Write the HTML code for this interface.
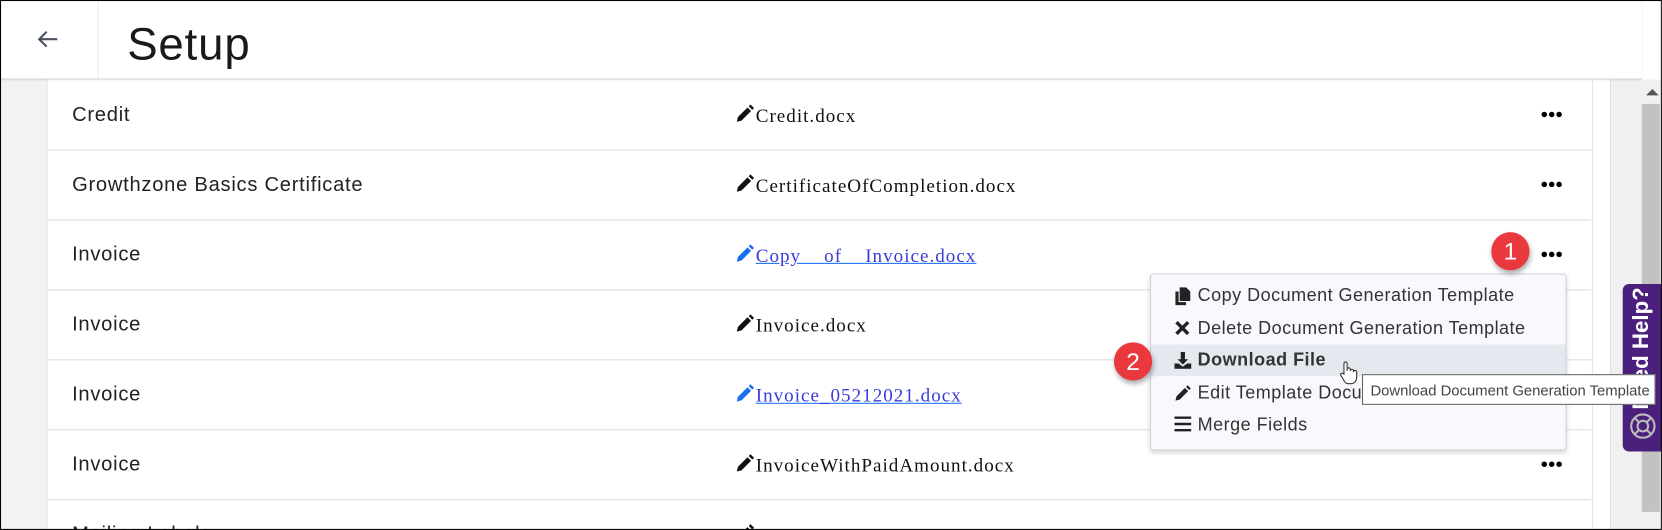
<!DOCTYPE html>
<html><head><meta charset="utf-8"><style>
html,body{margin:0;padding:0;width:1662px;height:530px;overflow:hidden;background:#fff}
#w{position:absolute;left:0;top:0;width:1568px;height:500px;transform:scale(1.0599);transform-origin:0 0;font-family:"Liberation Sans",sans-serif;overflow:hidden}
.a{position:absolute}
.row{position:absolute;left:44px;width:1457px;height:66px;border-bottom:1px solid #dcdcdc}
.c1{position:absolute;left:24px;top:23px;font-size:19px;color:#222;letter-spacing:0.7px}
.c2{position:absolute;left:650px;top:23px;font-family:"Liberation Serif",serif;font-size:18px;color:#111;white-space:pre;letter-spacing:0.95px}
.c2 svg{vertical-align:-1px;margin-right:1px}
.lnk{color:#3b3bdc;text-decoration:underline;text-decoration-color:#1a6ef5}
.dots{position:absolute;left:1410px;top:30px}
.mi{position:absolute;left:0;width:391px;height:30px;font-size:17px;color:#333;letter-spacing:0.45px}
.mi span{position:absolute;left:44px;top:5px;white-space:nowrap}
.mi svg{position:absolute;left:22px;top:7px}
.badge{position:absolute;width:36px;height:36px;border-radius:50%;background:#e9383e;color:#fff;font-size:23px;text-align:center;line-height:36px;box-shadow:1px 3px 5px rgba(0,0,0,.35)}
</style></head><body><div id="w">
<div class="a" style="left:0;top:75px;width:44px;height:425px;background:#f2f2f2"></div>
<div class="a" style="left:1519px;top:75px;width:49px;height:425px;background:#f0f0f0;border-left:1px solid #e0e0e0"></div>
<div class="a" style="left:1549px;top:98px;width:17px;height:385px;background:#c2c2c2"></div>
<div class="a" style="left:1553px;top:84px;width:0;height:0;border-left:6px solid transparent;border-right:6px solid transparent;border-bottom:6px solid #555"></div>
<div class="a" style="left:44px;top:75px;width:1457px;height:425px;background:#fff;border-left:1px solid #e6e6e6;border-right:1px solid #e6e6e6"></div>
<div class="row" style="top:75px"><div class="c1">Credit</div><div class="c2"><svg width="18" height="18" viewBox="0 0 16 16"><path d="M1 15l1-4 8-8 3 3-8 8zM11 2l1.5-1.5 3 3L14 5z" fill="#111"/></svg>Credit.docx</div><svg class="dots" width="20" height="6"><circle cx="3" cy="3" r="2.6"/><circle cx="10" cy="3" r="2.6"/><circle cx="17" cy="3" r="2.6"/></svg></div>
<div class="row" style="top:141px"><div class="c1">Growthzone Basics Certificate</div><div class="c2"><svg width="18" height="18" viewBox="0 0 16 16"><path d="M1 15l1-4 8-8 3 3-8 8zM11 2l1.5-1.5 3 3L14 5z" fill="#111"/></svg>CertificateOfCompletion.docx</div><svg class="dots" width="20" height="6"><circle cx="3" cy="3" r="2.6"/><circle cx="10" cy="3" r="2.6"/><circle cx="17" cy="3" r="2.6"/></svg></div>
<div class="row" style="top:207px"><div class="c1">Invoice</div><div class="c2 lnk"><svg width="18" height="18" viewBox="0 0 16 16"><path d="M1 15l1-4 8-8 3 3-8 8zM11 2l1.5-1.5 3 3L14 5z" fill="#1a6ef5"/></svg>Copy    of    Invoice.docx</div><svg class="dots" width="20" height="6"><circle cx="3" cy="3" r="2.6"/><circle cx="10" cy="3" r="2.6"/><circle cx="17" cy="3" r="2.6"/></svg></div>
<div class="row" style="top:273px"><div class="c1">Invoice</div><div class="c2"><svg width="18" height="18" viewBox="0 0 16 16"><path d="M1 15l1-4 8-8 3 3-8 8zM11 2l1.5-1.5 3 3L14 5z" fill="#111"/></svg>Invoice.docx</div></div>
<div class="row" style="top:339px"><div class="c1">Invoice</div><div class="c2 lnk"><svg width="18" height="18" viewBox="0 0 16 16"><path d="M1 15l1-4 8-8 3 3-8 8zM11 2l1.5-1.5 3 3L14 5z" fill="#1a6ef5"/></svg>Invoice_05212021.docx</div></div>
<div class="row" style="top:405px"><div class="c1">Invoice</div><div class="c2"><svg width="18" height="18" viewBox="0 0 16 16"><path d="M1 15l1-4 8-8 3 3-8 8zM11 2l1.5-1.5 3 3L14 5z" fill="#111"/></svg>InvoiceWithPaidAmount.docx</div><svg class="dots" width="20" height="6"><circle cx="3" cy="3" r="2.6"/><circle cx="10" cy="3" r="2.6"/><circle cx="17" cy="3" r="2.6"/></svg></div>
<div class="row" style="top:471px;height:29px;border:none;overflow:hidden"><div class="c1">Mailing Labels</div><div class="c2"><svg width="18" height="18" viewBox="0 0 16 16"><path d="M1 15l1-4 8-8 3 3-8 8zM11 2l1.5-1.5 3 3L14 5z" fill="#111"/></svg></div></div>
<div class="a" style="left:0;top:0;width:1549px;height:74px;background:#fff;border-bottom:1px solid #d6d6d6;box-shadow:0 1px 2px rgba(0,0,0,.08)"></div>
<div class="a" style="left:92px;top:0;width:1px;height:74px;background:#ececec"></div>
<svg class="a" style="left:34px;top:28px" width="22" height="18" viewBox="0 0 22 18"><path d="M20 9H3M10 2L3 9l7 7" stroke="#4a5060" stroke-width="2" fill="none"/></svg>
<div class="a" style="left:120px;top:18px;font-size:43px;color:#1a1a1a;letter-spacing:0.8px">Setup</div>
<div class="a" style="left:1085px;top:258px;width:391px;height:165px;background:#f7f9fc;border:1px solid #d0d4da;border-radius:3px;box-shadow:0 2px 4px rgba(0,0,0,.15)">
 <div class="mi" style="top:5px"><svg width="16" height="17" viewBox="0 0 16 17"><path d="M5 0h6l4 4v9H5z M1 4h3v10h7v3H1z" fill="#222"/></svg><span>Copy Document Generation Template</span></div>
 <div class="mi" style="top:36px"><svg width="15" height="15" viewBox="0 0 15 15"><path d="M2 2l11 11M13 2L2 13" stroke="#222" stroke-width="3.2"/></svg><span>Delete Document Generation Template</span></div>
 <div class="mi" style="top:66px;background:#e4e8ef"><svg width="16" height="16" viewBox="0 0 16 16"><path d="M6 0h4v7h3l-5 5-5-5h3z M0 11h4l4 3 4-3h4v5H0z" fill="#222"/></svg><span style="font-weight:bold">Download File</span></div>
 <div class="mi" style="top:97px"><svg width="16" height="16" viewBox="0 0 16 16"><path d="M1 15l1-4 8-8 3 3-8 8zM11 2l1.5-1.5 3 3L14 5z" fill="#222"/></svg><span>Edit Template Document</span></div>
 <div class="mi" style="top:127px"><svg width="16" height="14" viewBox="0 0 16 14"><path d="M0 1h16M0 7h16M0 13h16" stroke="#222" stroke-width="2.4"/></svg><span>Merge Fields</span></div>
</div>
<div class="a" style="left:1531px;top:268px;width:40px;height:158px;background:#4b1f7c;border-radius:6px 0 0 6px;overflow:hidden">
 <div class="a" style="left:-42px;top:50px;width:120px;height:26px;line-height:26px;transform:rotate(-90deg);transform-origin:50% 50%;color:#fff;font-weight:bold;font-size:21px;white-space:nowrap;text-align:right">Need Help?</div>
 <svg class="a" style="left:6px;top:121px" width="26" height="26" viewBox="0 0 26 26"><circle cx="13" cy="13" r="11" fill="none" stroke="#bbb" stroke-width="2"/><circle cx="13" cy="13" r="5" fill="none" stroke="#bbb" stroke-width="2"/><path d="M5 5l4.5 4.5M21 5l-4.5 4.5M5 21l4.5-4.5M21 21l-4.5-4.5" stroke="#bbb" stroke-width="2"/></svg>
</div>
<div class="a" style="left:1285px;top:353px;width:277px;height:29px;background:#fff;border:1px solid #666;font-size:14px;color:#444;line-height:29px;padding-left:7px;box-sizing:border-box;white-space:nowrap">Download Document Generation Template</div>
<svg class="a" style="left:1262px;top:340px" width="20" height="24" viewBox="0 0 20 24"><path d="M6 13V3a1.5 1.5 0 013 0v7V8.5a1.5 1.5 0 013 0V10a1.5 1.5 0 013 0v1a1.5 1.5 0 013 0v5c0 3-2 6-5 6H10c-2 0-3-1-4-3l-3-5c-.7-1.300.8-2.5 2-1.5z" fill="#fff" stroke="#333" stroke-width="1"/></svg>
<div class="badge" style="left:1407px;top:219px">1</div>
<div class="badge" style="left:1051px;top:323px">2</div>
<div class="a" style="left:0;top:0;width:1568px;height:500px;border:1px solid #000;box-sizing:border-box"></div>
</div></body></html>
